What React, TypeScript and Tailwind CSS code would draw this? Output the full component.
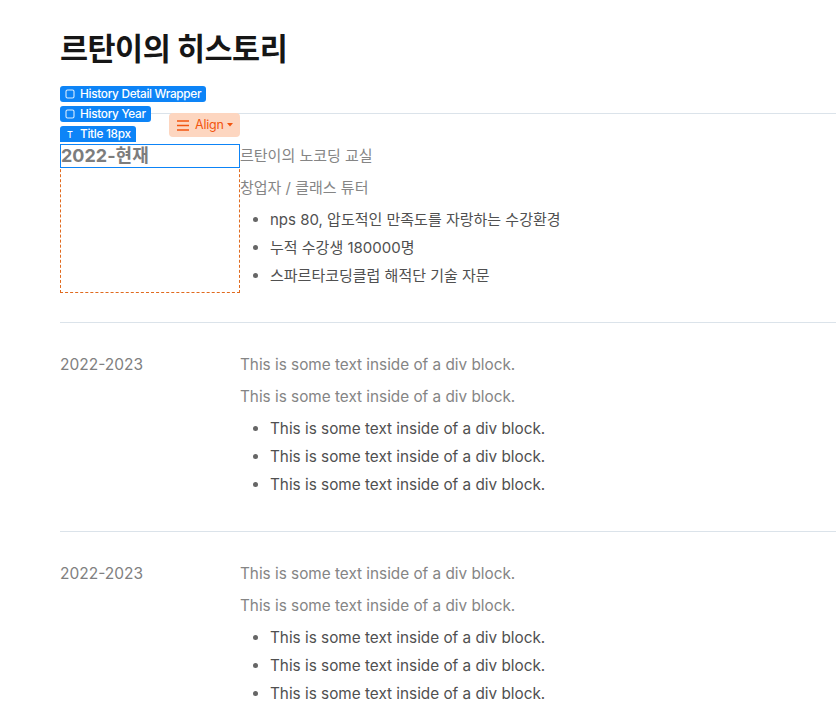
import { ReactNode } from 'react'

const FONT = "font-['Inter','Noto_Sans_CJK_KR',sans-serif]"

type Entry = {
  year: string
  lines: string[]
  bullets: string[]
}

const filler = 'This is some text inside of a div block.'

const entries: Entry[] = [
  {
    year: '2022-현재',
    lines: ['르탄이의 노코딩 교실', '창업자 / 클래스 튜터'],
    bullets: ['nps 80, 압도적인 만족도를 자랑하는 수강환경', '누적 수강생 180000명', '스파르타코딩클럽 해적단 기술 자문'],
  },
  { year: '2022-2023', lines: [filler, filler], bullets: [filler, filler, filler] },
  { year: '2022-2023', lines: [filler, filler], bullets: [filler, filler, filler] },
]

function BoxIcon() {
  return (
    <svg width="10" height="10" viewBox="0 0 10 10" className="shrink-0">
      <rect x="1" y="1" width="8" height="8" rx="1.5" fill="none" stroke="white" strokeOpacity="0.85" strokeWidth="1.1" />
    </svg>
  )
}

function Tag({ children, icon, flat }: { children: ReactNode; icon: ReactNode; flat?: boolean }) {
  return (
    <div
      className={`flex h-4 w-fit items-center gap-[5px] bg-[#0d84f7] px-[5px] text-[11.8px] font-medium leading-4 text-white ${
        flat ? 'rounded-t-[3px]' : 'rounded-[3px]'
      }`}
    >
      {icon}
      <span className="tracking-[-0.3px]">{children}</span>
    </div>
  )
}

function AlignButton() {
  return (
    <div className="flex h-6 items-center gap-[6px] rounded-[4px] bg-[#fdd6c0] pl-2 pr-[7px] text-[12.5px] text-[#f2550f]">
      <svg width="12" height="11" viewBox="0 0 12 11">
        <path d="M0 1h12M0 5.5h12M0 10h12" stroke="#f2550f" strokeWidth="1.6" />
      </svg>
      <span className="tracking-[-0.2px]">Align</span>
      <svg width="6" height="4" viewBox="0 0 6 4" className="-ml-[3px]">
        <path d="M0 0h6L3 3.5z" fill="#f2550f" />
      </svg>
    </div>
  )
}

function HistoryRow({ entry, selected }: { entry: Entry; selected?: boolean }) {
  const size = selected ? 'text-[15px]' : 'text-[15.3px]'
  return (
    <div className="relative flex border-t border-[#dbe3ea] pt-[30px] pb-[29px]">
      {selected && (
        <>
          {/* designer overlay: element tags + align control */}
          <div className="absolute left-0 top-[-28px] z-10 flex flex-col gap-1">
            <Tag icon={<BoxIcon />}>History Detail Wrapper</Tag>
            <Tag icon={<BoxIcon />}>History Year</Tag>
          </div>
          <div className="absolute left-0 top-[12px] z-10">
            <Tag flat icon={<span className="w-[10px] text-center text-[9px] leading-none">T</span>}>
              Title 18px
            </Tag>
          </div>
          <div className="absolute left-[109px] top-[-1px] z-10">
            <AlignButton />
          </div>
        </>
      )}

      <div className={`w-[180px] shrink-0 ${selected ? 'border border-dashed border-[#e06a1e]' : ''}`}>
        {selected ? (
          <div className="-m-px h-6 border border-[#0d84f7] text-[18px] font-bold leading-[22px] text-[#7d7d7d]">
            {entry.year}
          </div>
        ) : (
          <div className="text-[15.5px] leading-6 text-[#808080]">{entry.year}</div>
        )}
      </div>

      <div className="flex flex-col">
        {entry.lines.map((line, i) => (
          <p key={i} className={`mb-2 leading-6 text-[#858585] ${size}`}>
            {line}
          </p>
        ))}
        <ul className={`list-disc pb-px pl-[30px] leading-6 text-[#505050] marker:text-[#666] ${size}`}>
          {entry.bullets.map((b, i) => (
            <li key={i} className="mb-1">
              {b}
            </li>
          ))}
        </ul>
      </div>
    </div>
  )
}

export default function App() {
  return (
    <div className={`min-h-screen overflow-hidden bg-white ${FONT}`}>
      <div className="pl-[60px] pt-[29px]">
        <h1 className="mb-[44px] text-[30.5px] font-bold leading-10 tracking-[-0.5px] text-[#161616]">
          르탄이의 히스토리
        </h1>
        {entries.map((e, i) => (
          <HistoryRow key={i} entry={e} selected={i === 0} />
        ))}
      </div>
    </div>
  )
}
